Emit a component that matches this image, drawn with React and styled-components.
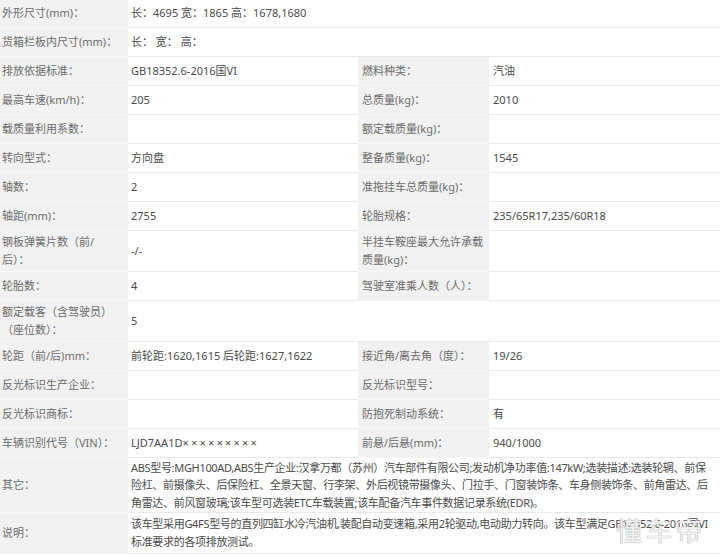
import React from "react";
import styled, { createGlobalStyle } from "styled-components";

const GlobalStyle = createGlobalStyle`
  html, body {
    margin: 0;
    padding: 0;
    background: #fff;
  }
  body {
    font-family: "Noto Sans", "Noto Sans CJK SC", sans-serif;
    font-size: 11px;
  }
`;

const Masked = styled.span`
  letter-spacing: 2.2px;
`;

const rows = [
  { l: "外形尺寸(mm)：", v: "长：4695 宽：1865 高：1678,1680", full: true },
  { l: "货箱栏板内尺寸(mm)：", v: "长： 宽： 高：", full: true },
  { l: "排放依据标准：", v: "GB18352.6-2016国VI", l2: "燃料种类：", v2: "汽油" },
  { l: "最高车速(km/h)：", v: "205", l2: "总质量(kg)：", v2: "2010" },
  { l: "载质量利用系数：", v: "", l2: "额定载质量(kg)：", v2: "" },
  { l: "转向型式：", v: "方向盘", l2: "整备质量(kg)：", v2: "1545" },
  { l: "轴数：", v: "2", l2: "准拖挂车总质量(kg)：", v2: "" },
  { l: "轴距(mm)：", v: "2755", l2: "轮胎规格：", v2: "235/65R17,235/60R18" },
  { l: ["钢板弹簧片数（前/", "后）："], v: "-/-", l2: ["半挂车鞍座最大允许承载", "质量(kg)："], v2: "" },
  { l: "轮胎数：", v: "4", l2: "驾驶室准乘人数（人）：", v2: "" },
  { l: ["额定载客（含驾驶员）", "（座位数）："], v: "5", full: true },
  { l: "轮距（前/后)mm：", v: "前轮距:1620,1615 后轮距:1627,1622", l2: "接近角/离去角（度）：", v2: "19/26" },
  { l: "反光标识生产企业：", v: "", l2: "反光标识型号：", v2: "" },
  { l: "反光标识商标：", v: "", l2: "防抱死制动系统：", v2: "有" },
  {
    l: "车辆识别代号（VIN）：",
    v: (
      <>
        LJD7AA1D<Masked>×××××××××</Masked>
      </>
    ),
    l2: "前悬/后悬(mm)：",
    v2: "940/1000",
  },
  {
    l: "其它：",
    v: [
      "ABS型号:MGH100AD,ABS生产企业:汉拿万都（苏州）汽车部件有限公司;发动机净功率值:147kW;选装描述:选装轮辋、前保",
      "险杠、前摄像头、后保险杠、全景天窗、行李架、外后视镜带摄像头、门拉手、门窗装饰条、车身侧装饰条、前角雷达、后",
      "角雷达、前风窗玻璃;该车型可选装ETC车载装置;该车配备汽车事件数据记录系统(EDR)。",
    ],
    full: true,
    dense: true,
  },
  {
    l: "说明：",
    v: [
      "该车型采用G4FS型号的直列四缸水冷汽油机,装配自动变速箱,采用2轮驱动,电动助力转向。该车型满足GB18352.6-2016国VI",
      "标准要求的各项排放测试。",
    ],
    full: true,
    tight: true,
  },
];

const Lines = ({ text }) =>
  Array.isArray(text)
    ? text.map((t, i) => (
        <React.Fragment key={i}>
          {i > 0 && <br />}
          {t}
        </React.Fragment>
      ))
    : text;

const App = () => {
  return (
    <Page>
      <GlobalStyle />
      <Table>
        {rows.map((r, i) => (
          <Row key={i}>
            <Label $dense={r.dense}>
              <Lines text={r.l} />
            </Label>
            <Value $full={r.full} $dense={r.dense} $tight={r.dense || r.tight}>
              <div>
                <Lines text={r.v} />
              </div>
            </Value>
            {!r.full && (
              <>
                <Label $second>
                  <Lines text={r.l2} />
                </Label>
                <Value $second>
                  <Lines text={r.v2} />
                </Value>
              </>
            )}
          </Row>
        ))}
      </Table>
      <Watermark>懂车帝</Watermark>
    </Page>
  );
};

const Page = styled.div`
  position: relative;
  width: 720px;
  height: 556px;
  overflow: hidden;
  background: #fff;
`;

const Table = styled.div`
  display: flex;
  flex-direction: column;
  margin-top: -1px;
`;

const Row = styled.div`
  display: grid;
  grid-template-columns: 128px 230px 131px 231px;
`;

const Cell = styled.div`
  display: flex;
  align-items: center;
  min-height: 28px;
  box-sizing: border-box;
  padding: ${(p) => (p.$dense ? "0" : "2px")} 3px;
  line-height: ${(p) => (p.$dense ? "17.5px" : "18px")};
  white-space: nowrap;
  overflow: hidden;
`;

const Label = styled(Cell)`
  background: #f1f1f1;
  color: #6c6c6c;
  padding-left: ${(p) => (p.$second ? "4px" : "2px")};
  border-bottom: 1px solid #f6f6f6;
`;

const Value = styled(Cell)`
  grid-column: ${(p) => (p.$full ? "2 / 5" : "auto")};
  background: #fff;
  color: #4a4a4a;
  padding-left: ${(p) => (p.$second ? "4px" : "3px")};
  padding-right: 0;
  letter-spacing: ${(p) => (p.$tight ? "-0.32px" : "normal")};
  border-bottom: 1px solid #e9e9e9;
  min-height: ${(p) => (p.$dense ? "55px" : "29px")};
`;

const Watermark = styled.div`
  position: absolute;
  right: 14px;
  bottom: 11px;
  font-family: "Noto Sans CJK SC", sans-serif;
  font-size: 26px;
  line-height: 30px;
  letter-spacing: 4px;
  color: rgba(255, 255, 255, 0.85);
  text-shadow: 0 0 1px #a5a5a5, 0 0 1px #a5a5a5;
`;

export default App;
